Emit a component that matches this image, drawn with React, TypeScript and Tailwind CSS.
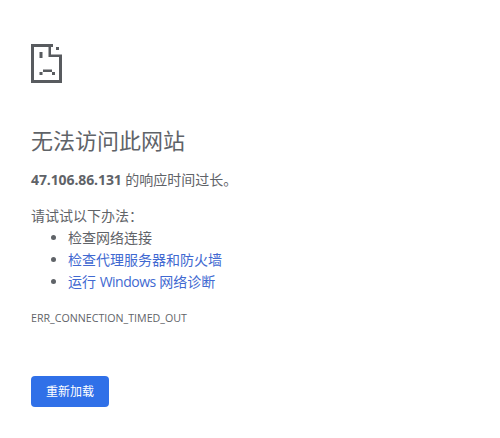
export default function App() {
  return (
    <div className="w-[500px] h-[438px] bg-white overflow-hidden pl-[31px] pt-[44px] text-[#5f6368] font-['Open_Sans','Noto_Sans_CJK_SC',sans-serif]">
      <svg width="31" height="39" viewBox="0 0 31 39" className="block">
        <path fill="#585b5f" d="M0 0h22v3H3v33h25V11h3v28H0z" />
        <path fill="#585b5f" d="M17.500 0H20v10.500h11V13H17.500z" />
        <path fill="#585b5f" d="M25 3h3v3h-3z" />
        <path fill="#585b5f" d="M8.500 8h3v6h-3zM12 25.500h9V28h-9zM8.500 28h3v3h-3zM21 28h3v3h-3z" />
      </svg>
      <h1 className="mt-[42px] text-[22px] leading-[30px] font-normal">无法访问此网站</h1>
      <p className="mt-[14px] text-[14px] leading-[22px]"><b className="font-bold tracking-[-0.1px]">47.106.86.131</b> 的响应时间过长。</p>
      <p className="mt-[14px] text-[14px] leading-[22px]">请试试以下办法：</p>
      <ul className="mt-[0px] ml-[37px] list-disc text-[14px] leading-[22px] marker:text-[#5f6368]">
        <li>检查网络连接</li>
        <li className="text-[#4169d1]">检查代理服务器和防火墙</li>
        <li className="text-[#4169d1]">运行 <span className="tracking-[-0.5px]">Windows</span> 网络诊断</li>
      </ul>
      <p className="mt-[18px] text-[10.67px] leading-[14px]">ERR_CONNECTION_TIMED_OUT</p>
      <button className="mt-[51px] block w-[78px] h-[31px] rounded-[4px] bg-[#3070e8] text-white text-[12px]">重新加载</button>
    </div>
  );
}
